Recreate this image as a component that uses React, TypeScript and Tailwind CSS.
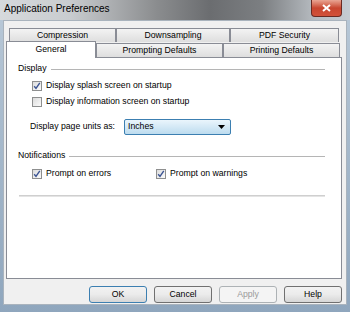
import React from "react";

const font = { fontFamily: '"Liberation Sans", Arial, sans-serif' };

function Check({ checked }: { checked: boolean }) {
  return (
    <div className="w-[10px] h-[10px] border border-[#8e8f8f] bg-gradient-to-br from-[#dcdcdc] to-[#fbfbfb] flex items-center justify-center shrink-0">
      {checked && (
        <svg width="8" height="8" viewBox="0 0 8 8">
          <path d="M1.2 4.2 L3 6.4 L6.8 0.8" fill="none" stroke="#3a5392" strokeWidth="1.4" />
        </svg>
      )}
    </div>
  );
}

function Tab({ label, w }: { label: string; w: string }) {
  return (
    <div className={`${w} flex items-center justify-center border border-[#898c95] border-b-0 bg-gradient-to-b from-[#f3f3f3] to-[#dedede]`}>
      {label}
    </div>
  );
}

function Btn({ label, primary, disabled }: { label: string; primary?: boolean; disabled?: boolean }) {
  return (
    <div
      className={`w-[58px] h-[17px] rounded-[3px] border flex items-center justify-center ${
        primary ? "border-[#3c7fb1]" : disabled ? "border-[#adb2b5]" : "border-[#707070]"
      } ${disabled ? "text-[#9a9a9a] bg-[#f4f4f4]" : "text-black bg-gradient-to-b from-[#f2f2f2] via-[#ebebeb] to-[#d6d6d6]"}`}
    >
      {label}
    </div>
  );
}

export default function App() {
  return (
    <div
      className="w-[350px] h-[312px] overflow-hidden flex flex-col bg-gradient-to-b from-[#b9c9d8] to-[#8fa6bd] text-[8.7px] text-black"
      style={font}
    >
      {/* title bar */}
      <div className="h-[20px] flex items-start relative bg-[linear-gradient(90deg,#d6d9dc_0%,#c9cccf_20%,#8a8c8e_45%,#6b6d70_60%,#7c7f82_75%,#b7bcc1_90%,#c5ccd3_100%)]">
        <div className="pl-[4px] pt-[4px] text-[10px] leading-none">Application Preferences</div>
        <div className="absolute right-[8px] top-0 w-[31px] h-[17px] rounded-b-[4px] border border-[#6b2a22] border-t-0 bg-gradient-to-b from-[#e8a493] via-[#c8452f] to-[#d2523a] flex items-center justify-center">
          <svg width="9" height="8" viewBox="0 0 9 8">
            <path d="M1 1 L8 7 M8 1 L1 7" stroke="white" strokeWidth="2" />
          </svg>
        </div>
      </div>

      {/* client */}
      <div className="ml-[3px] mr-[3px] h-[285px] bg-[#f0f0f0] border border-[#a9b3bd] flex flex-col">
        <div className="h-[7px]" />
        {/* tab row 1 */}
        <div className="flex h-[14px] ml-[5px]">
          <Tab label="Compression" w="w-[107px]" />
          <Tab label="Downsampling" w="w-[114px]" />
          <Tab label="PDF Security" w="w-[109px]" />
        </div>
        {/* tab row 2 */}
        <div className="flex items-end h-[15px] ml-[2px] relative z-10">
          <div className="w-[90px] h-[17px] -mb-[1px] flex items-center justify-center border border-[#898c95] border-b-0 bg-white">
            General
          </div>
          <div className="w-[127px] h-[14px] flex items-center justify-center border border-[#898c95] border-b-0 bg-gradient-to-b from-[#f3f3f3] to-[#dedede]">
            Prompting Defaults
          </div>
          <div className="w-[117px] h-[14px] flex items-center justify-center border border-[#898c95] border-b-0 bg-gradient-to-b from-[#f3f3f3] to-[#dedede]">
            Printing Defaults
          </div>
        </div>
        {/* panel */}
        <div className="ml-[2px] w-[336px] h-[222px] bg-white border border-[#898c95]">
          <div className="pl-[11px] pr-[16px] pt-[5px]">
            <div className="flex items-center h-[12px]">
              <span>Display</span>
              <div className="flex-1 ml-[4px] border-t border-[#b5b5b5]" />
            </div>
            <div className="pl-[14px] mt-[5px] flex flex-col gap-[5px]">
              <div className="flex items-center gap-[4px] h-[11px]">
                <Check checked />
                <span>Display splash screen on startup</span>
              </div>
              <div className="flex items-center gap-[4px] h-[11px]">
                <Check checked={false} />
                <span>Display information screen on startup</span>
              </div>
            </div>
            <div className="flex items-center mt-[12px] pl-[12px]">
              <span className="w-[94px]">Display page units as:</span>
              <div className="w-[107px] h-[16px] rounded-[2px] border border-[#3c7fb1] bg-gradient-to-b from-[#eaf5fc] to-[#bddcef] flex items-center justify-between pl-[3px] pr-[5px]">
                <span>Inches</span>
                <svg width="7" height="4" viewBox="0 0 7 4">
                  <path d="M0 0 H7 L3.5 4 Z" fill="#000" />
                </svg>
              </div>
            </div>
            <div className="flex items-center h-[12px] mt-[15px]">
              <span>Notifications</span>
              <div className="flex-1 ml-[4px] border-t border-[#b5b5b5]" />
            </div>
            <div className="pl-[14px] mt-[6px] flex items-center h-[11px]">
              <div className="flex items-center gap-[4px] w-[124px]">
                <Check checked />
                <span>Prompt on errors</span>
              </div>
              <div className="flex items-center gap-[4px]">
                <Check checked />
                <span>Prompt on warnings</span>
              </div>
            </div>
            <div className="mt-[16px] ml-[1px] h-[2px] bg-[#cfcfcf] border-b border-[#e4e4e4]" />
          </div>
        </div>
        {/* buttons */}
        <div className="flex justify-end gap-[7px] pr-[4px] mt-[7px]">
          <Btn label="OK" primary />
          <Btn label="Cancel" />
          <Btn label="Apply" disabled />
          <Btn label="Help" />
        </div>
      </div>
    </div>
  );
}
